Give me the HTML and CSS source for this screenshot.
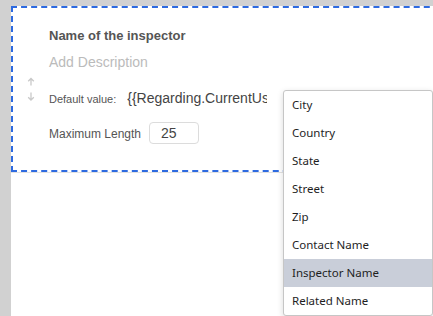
FILE: index.html
```html
<!DOCTYPE html>
<html lang="en">
<head>
    <meta charset="UTF-8">
    <meta name="viewport" content="width=device-width, initial-scale=1.0">
    <title>Field editor</title>
    <link rel="stylesheet" href="styles.css">
</head>
<body>
    <div class="canvas">
        <div class="field">
            <div class="handle">
                <svg width="10" height="26" viewBox="0 0 10 26">
                    <path d="M5 1.5V8.5M2.2 4.3L5 1.5L7.8 4.3" fill="none" stroke="#c9c9c9" stroke-width="1.3"/>
                    <path d="M5 15.5V23M2.2 20.2L5 23L7.8 20.2" fill="none" stroke="#c9c9c9" stroke-width="1.3"/>
                </svg>
            </div>
            <div class="fieldBody">
                <div class="fieldTitle">Name of the inspector</div>
                <div class="fieldDesc">Add Description</div>
                <div class="row defaultRow">
                    <span class="label">Default value:</span>
                    <span class="value">{{Regarding.CurrentUser.Name}}</span>
                </div>
                <div class="row lengthRow">
                    <span class="label labelBig">Maximum Length</span>
                    <span class="numBox">25</span>
                </div>
            </div>
        </div>
    </div>

    <!-- variable picker -->
    <ul class="menu">
        <li>City</li>
        <li>Country</li>
        <li>State</li>
        <li>Street</li>
        <li>Zip</li>
        <li>Contact Name</li>
        <li class="active">Inspector Name</li>
        <li>Related Name</li>
    </ul>
</body>
</html>
```

FILE: styles.css
```css
body{
    margin: 0;
    background-color: #d1d1d1;
    font-family: "Liberation Sans", Arial, sans-serif;
    overflow: hidden;
    height: 316px;
}
.canvas{
    margin: 6px 0 0 11px;
    width: 600px;
    height: 310px;
    background-color: #fff;
}
.field{
    display: flex;
    height: 162px;
    border: 2px dashed #2d6ae0;
    border-right: none;
    box-shadow: 0 1px 0 #e2e2e2;
}
.handle{
    width: 36px;
    display: flex;
    align-items: center;
    justify-content: center;
    padding-top: 1px;
}
.handle svg{
    display: block;
}
.fieldBody{
    padding-top: 20px;
}
.fieldTitle{
    font-size: 13px;
    line-height: 16px;
    font-weight: bold;
    color: #555;
}
.fieldDesc{
    margin-top: 9px;
    font-size: 14px;
    line-height: 18px;
    color: #bbb;
}
.row{
    display: flex;
    align-items: baseline;
}
.defaultRow{
    margin-top: 18px;
}
.label{
    font-size: 11px;
    color: #555;
}
.labelBig{
    font-size: 12px;
}
.value{
    margin-left: 11px;
    width: 140px;
    overflow: hidden;
    white-space: nowrap;
    font-size: 14px;
    line-height: 18px;
    color: #444;
}
.lengthRow{
    margin-top: 15px;
}
.numBox{
    margin-left: 8px;
    width: 37px;
    height: 20px;
    padding-left: 11px;
    border: 1px solid #dcdcdc;
    border-radius: 4px;
    font-size: 14px;
    line-height: 20px;
    color: #444;
}
.menu{
    position: absolute;
    left: 283px;
    top: 90px;
    width: 148px;
    margin: 0;
    padding: 0;
    list-style: none;
    background-color: #fff;
    border: 1px solid #c6c6c6;
    border-radius: 3px;
    box-shadow: 0 2px 6px rgba(0,0,0,0.15);
    font-family: "Noto Sans", "Open Sans", sans-serif;
    font-size: 11.5px;
    color: #1e1e1e;
}
.menu li{
    height: 28px;
    line-height: 28px;
    padding-left: 8px;
}
.menu .active{
    background-color: #c9ced9;
}
```
